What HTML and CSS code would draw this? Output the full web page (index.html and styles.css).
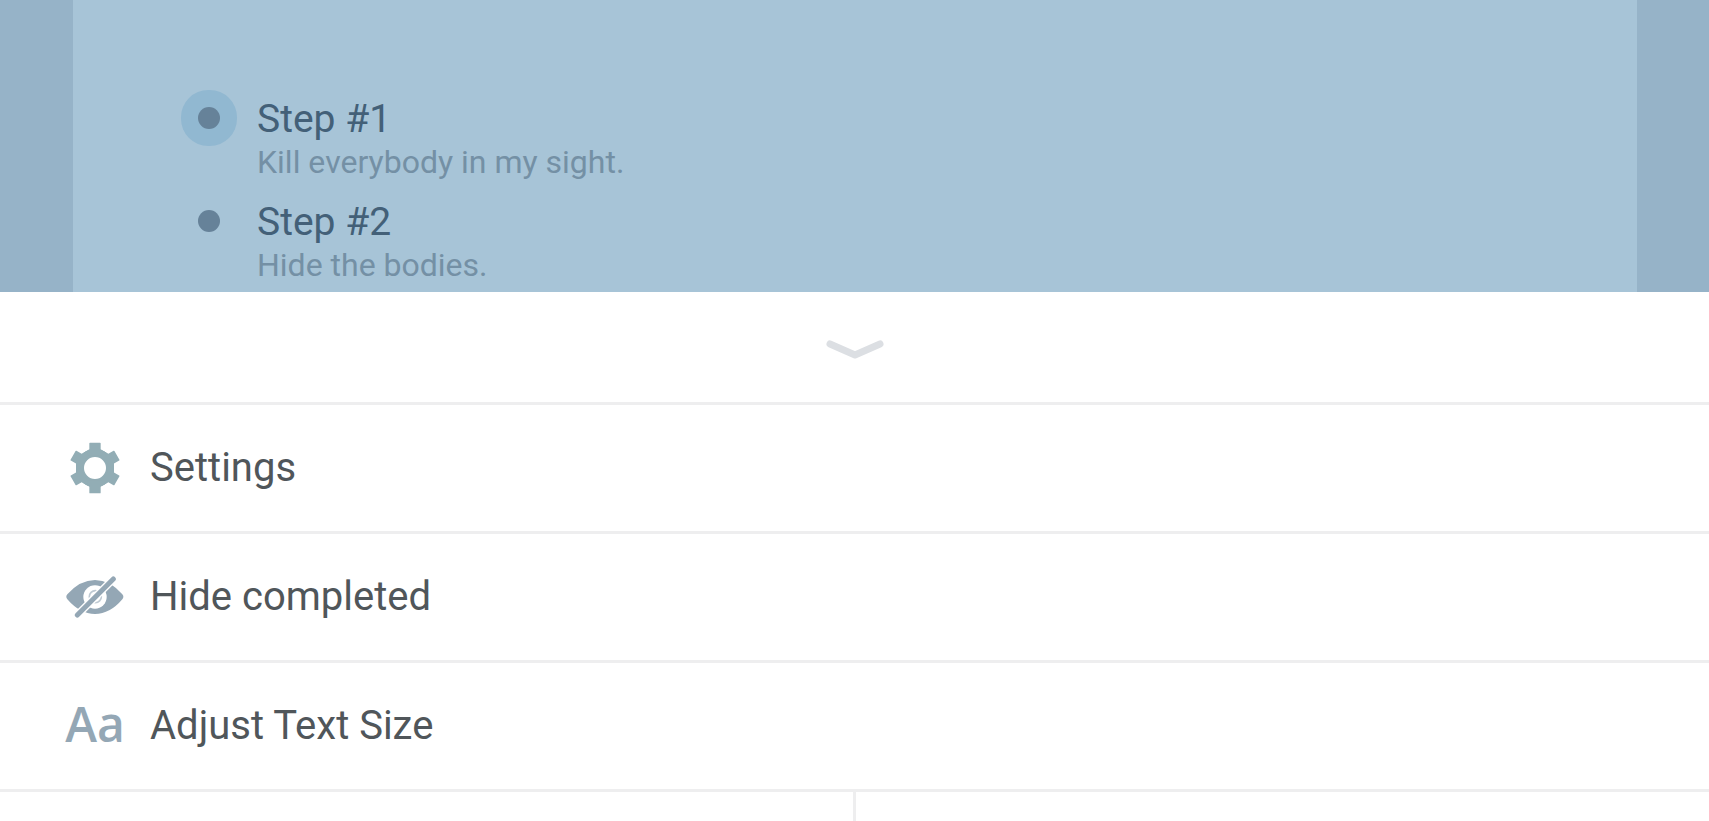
FILE: index.html
```
<!DOCTYPE html>
<html lang="en">
<head>
    <meta charset="UTF-8">
    <meta name="viewport" content="width=device-width, initial-scale=1.0">
    <title>Outline</title>
    <link rel="stylesheet" href="styles.css">
</head>
<body>
    <main class="backdrop">
        <ul class="outline">
            <li class="step">
                <span class="dot collapsed"></span>
                <div>
                    <div class="step-title">Step #1</div>
                    <div class="step-note">Kill everybody in my sight.</div>
                </div>
            </li>
            <li class="step">
                <span class="dot"></span>
                <div>
                    <div class="step-title">Step #2</div>
                    <div class="step-note">Hide the bodies.</div>
                </div>
            </li>
        </ul>
    </main>
    <div class="sheet">
        <button class="handle" aria-label="Close menu">
            <svg width="60" height="20" viewBox="0 0 60 20">
                <path d="M5 5 L30 16 L55 5" fill="none" stroke="currentColor" stroke-width="7" stroke-linecap="round" stroke-linejoin="round"/>
            </svg>
        </button>
        <button class="option">
            <span class="icon gear">
                <svg width="52" height="52" viewBox="-78 -78 156 156" fill="currentColor">
                    <defs>
                        <path id="tooth" d="M-15 -76 H15 Q17 -76 17 -74 V-56 L34 -46 L20 -38 H-20 L-34 -46 L-17 -56 V-74 Q-17 -76 -15 -76 Z"/>
                    </defs>
                    <circle r="45" fill="none" stroke="currentColor" stroke-width="24"/>
                    <use href="#tooth"/>
                    <use href="#tooth" transform="rotate(60)"/>
                    <use href="#tooth" transform="rotate(120)"/>
                    <use href="#tooth" transform="rotate(180)"/>
                    <use href="#tooth" transform="rotate(240)"/>
                    <use href="#tooth" transform="rotate(300)"/>
                </svg>
            </span>
            Settings
        </button>
        <button class="option">
            <span class="icon">
                <svg width="58" height="42" viewBox="0 0 174 126">
                    <path d="M1 63 Q0 60 4 55 Q42 12 87 12 Q132 12 169 55 Q173 60 172 63 Q172 66 169 70 Q132 114 87 114 Q42 114 4 70 Q1 66 1 63 Z" fill="currentColor"/>
                    <circle cx="87" cy="63" r="35" fill="#fff"/>
                    <circle cx="88" cy="62" r="18" fill="none" stroke="currentColor" stroke-width="5" opacity=".6"/>
                    <path d="M34 117 L142 9" stroke="#fff" stroke-width="23" stroke-linecap="round"/>
                    <path d="M34 117 L142 9" stroke="currentColor" stroke-width="15" stroke-linecap="round"/>
                </svg>
            </span>
            Hide completed
        </button>
        <button class="option">
            <span class="icon letters" aria-hidden="true">Aa</span>
            Adjust Text Size
        </button>
        <div class="split">
            <div class="half"></div>
            <div class="half"></div>
        </div>
    </div>
</body>
</html>
```

FILE: styles.css
```
:root {
    --page: #a7c4d7;
    --page-edge: #96b3c8;
    --line: #eeeeef;
    --icon: #94a7b5;
    --text: #50565a;
}

* {
    box-sizing: border-box;
}

body {
    margin: 0;
    min-height: 100vh;
    display: flex;
    flex-direction: column;
    font-family: Roboto, sans-serif;
    background: #fff;
    color: var(--text);
}

.backdrop {
    padding: 0 72px 0 73px;
    background: var(--page-edge);
}

.outline {
    display: flex;
    flex-direction: column;
    gap: 17px;
    margin: 0;
    padding: 95px 125px 8px;
    list-style: none;
    background: var(--page);
}

.step {
    display: flex;
    align-items: flex-start;
    gap: 37px;
}

.dot {
    width: 22px;
    height: 22px;
    margin-top: 12px;
    border-radius: 50%;
    background: #668299;
}

.dot.collapsed {
    box-shadow: 0 0 0 17px #91b8d1;
}

.step-title {
    font-size: 39px;
    line-height: 48px;
    color: #436078;
}

.step-note {
    font-size: 32px;
    line-height: 38px;
    color: #7490a5;
}

.sheet {
    flex: 1;
    display: flex;
    flex-direction: column;
    background: #fff;
}

button {
    border: none;
    background: none;
    font: inherit;
    color: inherit;
    cursor: pointer;
}

.handle {
    display: flex;
    align-items: center;
    justify-content: center;
    padding: 47px 0 43px;
    color: #dcdfe3;
}

.option {
    display: flex;
    align-items: center;
    gap: 26px;
    height: 129px;
    padding: 0 66px;
    border-top: 3px solid var(--line);
    font-size: 40px;
    line-height: 48px;
    text-align: left;
}

.icon {
    display: flex;
    justify-content: center;
    width: 58px;
    color: var(--icon);
}

.icon.gear {
    color: #92adb5;
}

.icon.letters {
    padding-bottom: 4px;
    font-family: "Open Sans", sans-serif;
    font-size: 48px;
    font-weight: 600;
}

.split {
    flex: 1;
    display: flex;
    border-top: 3px solid var(--line);
}

.half {
    flex: 1;
}

.half + .half {
    border-left: 3px solid var(--line);
}
```
